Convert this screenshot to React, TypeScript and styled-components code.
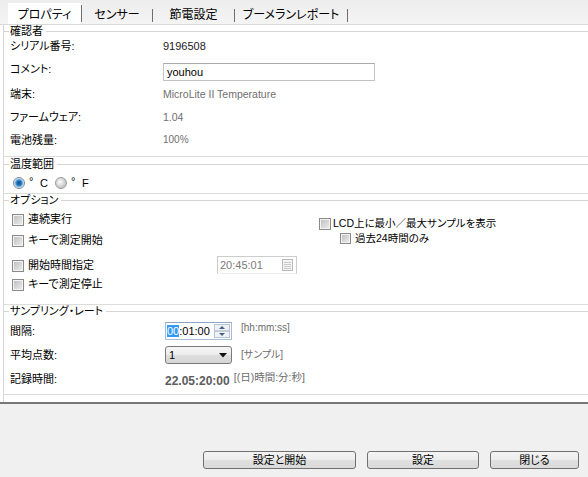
import React from "react";
import styled, { createGlobalStyle } from "styled-components";

const FONT = `"Liberation Sans", "Noto Sans CJK JP", sans-serif`;

const Global = createGlobalStyle`
  html, body { margin: 0; padding: 0; background: #f0f0f0; }
  body { font-family: ${FONT}; font-size: 11px; color: #000; }
  * { box-sizing: border-box; }
`;

const Window = styled.div`
  width: 588px;
  height: 477px;
  display: flex;
  flex-direction: column;
  background: #f0f0f0;
  overflow: hidden;
  font-feature-settings: "palt";
`;

const TabBar = styled.div`
  height: 24px;
  flex: none;
  display: flex;
  align-items: flex-end;
  padding-left: 8px;
  background: linear-gradient(#ededed, #f4f4f4);
`;

const Tab = styled.div<{ $w: number; $active?: boolean }>`
  position: relative;
  width: ${(p) => p.$w}px;
  height: 21px;
  padding-top: 5px;
  padding-right: 1px;
  text-align: center;
  font-size: 12px;
  line-height: 14px;
  background: ${(p) => (p.$active ? "#ffffff" : "transparent")};
  &::after {
    content: "";
    position: absolute;
    right: 0;
    width: 1px;
    top: ${(p) => (p.$active ? 2 : 6)}px;
    bottom: 2px;
    background: #6e6e6e;
  }
`;

const Panel = styled.div`
  flex: none;
  background: #ffffff;
  border-top: 1px solid #d9d9d9;
  border-bottom: 2px solid #777777;
`;

const Inner = styled.div`
  margin-left: 3px;
  border-left: 1px solid #d6d6d6;
  padding-bottom: 7px;
  display: flex;
  flex-direction: column;
`;

const GroupTitle = styled.div<{ $gap?: number }>`
  height: 12px;
  margin-top: ${(p) => p.$gap ?? 0}px;
  display: flex;
  align-items: center;
  font-size: 11px;
  line-height: 12px;
  white-space: nowrap;
  &::before {
    content: "";
    width: 5px;
    height: 1px;
    margin-right: 1px;
    background: #d5d5d5;
  }
  &::after {
    content: "";
    flex: 1;
    height: 1px;
    margin-left: 3px;
    background: #d5d5d5;
  }
`;

const GroupBody = styled.div<{ $h: number; $pt?: number; $pl?: number }>`
  height: ${(p) => p.$h}px;
  padding-top: ${(p) => p.$pt ?? 0}px;
  padding-left: ${(p) => p.$pl ?? 6}px;
  border-bottom: 1px solid #dcdcdc;
`;

const InfoRow = styled.div<{ $h: number; $end?: boolean }>`
  height: ${(p) => p.$h}px;
  display: flex;
  align-items: ${(p) => (p.$end ? "flex-end" : "center")};
`;

const Label = styled.div<{ $w?: number }>`
  width: ${(p) => p.$w ?? 153}px;
  flex: none;
  font-size: 11px;
  line-height: 14px;
  align-self: center;
`;

const Value = styled.div<{ $grey?: boolean; $size?: number }>`
  font-size: ${(p) => p.$size ?? 11}px;
  line-height: 14px;
  color: ${(p) => (p.$grey ? "#6f6f6f" : "#1a1a1a")};
`;

const TextBox = styled.div`
  width: 212px;
  height: 18px;
  margin-bottom: 1px;
  border: 1px solid #c3c3c3;
  border-top-color: #ababab;
  padding: 0 3px;
  font-size: 11px;
  line-height: 16px;
  color: #000;
  display: flex;
  align-items: center;
`;

const RadioRow = styled.div`
  height: 20px;
  display: flex;
  align-items: center;
  padding-left: 2px;
  font-size: 11px;
`;

const Radio = styled.span<{ $on?: boolean }>`
  width: 12px;
  height: 12px;
  flex: none;
  border-radius: 50%;
  border: 1px solid ${(p) => (p.$on ? "#7d8a99" : "#9b9b9b")};
  background: ${(p) =>
    p.$on
      ? "radial-gradient(circle at 50% 50%, #0f4f8a 0, #1d6db3 2px, #4a9ad6 3.2px, #a8d1ef 4.2px, #e9e9e9 5px)"
      : "radial-gradient(circle at 40% 40%, #fafafa 0, #e2e2e2 3px, #c9c9c9 5px)"};
`;

const Deg = styled.span`
  width: 11px;
  margin-left: 4px;
  font-size: 11px;
  line-height: 12px;
  position: relative;
  top: -2px;
`;

const Unit = styled.span<{ $mr?: number }>`
  margin-right: ${(p) => p.$mr ?? 0}px;
  line-height: 12px;
`;

const OptionGrid = styled.div`
  display: grid;
  grid-template-columns: 307px 1fr;
`;

const Column = styled.div<{ $pt?: number }>`
  display: flex;
  flex-direction: column;
  padding-top: ${(p) => p.$pt ?? 0}px;
`;

const CheckRow = styled.div<{ $mt?: number; $h?: number; $indent?: number; $gap?: number; $size?: number }>`
  height: ${(p) => p.$h ?? 18}px;
  margin-top: ${(p) => p.$mt ?? 0}px;
  padding-left: ${(p) => p.$indent ?? 0}px;
  display: flex;
  align-items: center;
  gap: ${(p) => p.$gap ?? 4}px;
  font-size: ${(p) => p.$size ?? 11}px;
  line-height: 14px;
  white-space: nowrap;
`;

const Check = styled.span<{ $size?: number }>`
  width: ${(p) => p.$size ?? 12}px;
  height: ${(p) => p.$size ?? 12}px;
  flex: none;
  margin-top: 2px;
  border: 1px solid #8a8a8a;
  box-shadow: inset 0 0 0 1px #f3f3f3;
  background: linear-gradient(135deg, #bcbcbc 0%, #d8d8d8 55%, #efefef 100%);
`;

const CheckText = styled.span`
  flex: 1;
`;

const TimeBox = styled.div`
  width: 80px;
  height: 18px;
  margin-right: 22px;
  border: 1px solid #cdcdcd;
  border-bottom-color: #eeeeee;
  display: flex;
  align-items: center;
  justify-content: space-between;
  padding: 0 3px 0 2px;
  font-size: 11px;
  color: #7b7b7b;
`;

const FieldRow = styled.div`
  height: 24px;
  display: flex;
  align-items: center;
`;

const SpinBox = styled.div`
  width: 67px;
  height: 18px;
  border: 1px solid #a9bcd6;
  border-top-color: #8ea6c8;
  display: flex;
  align-items: center;
  padding: 0 1px;
  font-size: 11px;
  line-height: 13px;
`;

const Selected = styled.span`
  background: #3399ff;
  color: #ffffff;
`;

const SpinText = styled.span`
  flex: 1;
`;

const Hint = styled.span<{ $ml?: number; $mt?: number; $size?: number }>`
  margin-left: ${(p) => p.$ml ?? 9}px;
  margin-top: ${(p) => p.$mt ?? 0}px;
  align-self: center;
  font-size: ${(p) => p.$size ?? 10}px;
  line-height: 12px;
  color: #6b6b6b;
  white-space: nowrap;
`;

const Select = styled.div`
  width: 67px;
  height: 18px;
  border: 1px solid #7a7a7a;
  border-radius: 3px;
  background: linear-gradient(#f6f6f6 0%, #ececec 50%, #dedede 51%, #d6d6d6 100%);
  display: flex;
  align-items: center;
  justify-content: space-between;
  padding: 0 4px 0 3px;
  font-size: 11px;
`;

const Duration = styled.span`
  font-size: 12px;
  font-weight: bold;
  color: #5c5c5c;
  line-height: 14px;
  margin-top: 3px;
`;

const Footer = styled.div`
  flex: 1;
  display: flex;
  justify-content: flex-end;
  align-items: flex-end;
  gap: 11px;
  padding: 0 9px 8px 0;
`;

const Button = styled.button<{ $w: number }>`
  width: ${(p) => p.$w}px;
  height: 18px;
  padding: 0;
  border: 1px solid #707070;
  border-radius: 3px;
  background: linear-gradient(#f4f4f4 0%, #ececec 50%, #e0e0e0 51%, #dadada 100%);
  font-family: ${FONT};
  font-feature-settings: "palt";
  font-size: 11px;
  line-height: 14px;
  color: #000;
`;

const SpinIcon = () => (
  <svg width="16" height="14" viewBox="0 0 16 14">
    <rect x="0.5" y="0.5" width="15" height="13" fill="#eef2f7" stroke="#b6c3d3" />
    <line x1="1" y1="7" x2="15" y2="7" stroke="#9aaabd" />
    <polygon points="5,5 8,2 11,5" fill="#4a5f80" />
    <polygon points="5,9 8,12 11,9" fill="#4a5f80" />
  </svg>
);

const CalendarIcon = () => (
  <svg width="11" height="12" viewBox="0 0 11 12">
    <rect x="0.5" y="0.5" width="10" height="11" fill="#f4f4f4" stroke="#b9b9b9" />
    <line x1="2" y1="3.5" x2="9" y2="3.5" stroke="#c8c8c8" />
    <line x1="2" y1="5.5" x2="9" y2="5.5" stroke="#c8c8c8" />
    <line x1="2" y1="7.5" x2="9" y2="7.5" stroke="#c8c8c8" />
    <line x1="2" y1="9.5" x2="9" y2="9.5" stroke="#c8c8c8" />
  </svg>
);

const DropArrow = () => (
  <svg width="8" height="5" viewBox="0 0 8 5">
    <polygon points="0,0 8,0 4,4.5" fill="#111" />
  </svg>
);

const tabs = [
  { label: "プロパティ", w: 74, active: true },
  { label: "センサー", w: 71 },
  { label: "節電設定", w: 82 },
  { label: "ブーメランレポート", w: 113 },
];

const info = [
  { label: "端末:", value: "MicroLite II Temperature", size: 10.5 },
  { label: "ファームウェア:", value: "1.04", size: 10.5 },
  { label: "電池残量:", value: "100%", size: 10 },
];

export default function App() {
  return (
    <Window>
      <Global />
      <TabBar>
        {tabs.map((t) => (
          <Tab key={t.label} $w={t.w} $active={t.active}>
            {t.label}
          </Tab>
        ))}
      </TabBar>
      <Panel>
        <Inner>
          <GroupTitle>確認者</GroupTitle>
          <GroupBody $h={120}>
            <InfoRow $h={18}>
              <Label>シリアル番号:</Label>
              <Value>9196508</Value>
            </InfoRow>
            <InfoRow $h={27} $end>
              <Label>コメント:</Label>
              <TextBox>youhou</TextBox>
            </InfoRow>
            {info.map((r) => (
              <InfoRow key={r.label} $h={23}>
                <Label>{r.label}</Label>
                <Value $grey $size={r.size}>
                  {r.value}
                </Value>
              </InfoRow>
            ))}
          </GroupBody>

          <GroupTitle $gap={1}>温度範囲</GroupTitle>
          <GroupBody $h={24} $pt={3} $pl={7}>
            <RadioRow>
              <Radio $on />
              <Deg>°</Deg>
              <Unit $mr={7}>C</Unit>
              <Radio />
              <Deg>°</Deg>
              <Unit>F</Unit>
            </RadioRow>
          </GroupBody>

          <GroupTitle>オプション</GroupTitle>
          <GroupBody $h={99} $pt={4} $pl={8}>
            <OptionGrid>
              <Column>
                <CheckRow>
                  <Check />
                  <CheckText>連続実行</CheckText>
                </CheckRow>
                <CheckRow $mt={3}>
                  <Check />
                  <CheckText>キーで測定開始</CheckText>
                </CheckRow>
                <CheckRow $mt={7}>
                  <Check />
                  <CheckText>開始時間指定</CheckText>
                  <TimeBox>
                    <span>20:45:01</span>
                    <CalendarIcon />
                  </TimeBox>
                </CheckRow>
                <CheckRow $mt={1}>
                  <Check />
                  <CheckText>キーで測定停止</CheckText>
                </CheckRow>
              </Column>
              <Column $pt={5}>
                <CheckRow $h={15} $gap={2} $size={10.5}>
                  <Check />
                  <CheckText>LCD上に最小／最大サンプルを表示</CheckText>
                </CheckRow>
                <CheckRow $h={15} $indent={21} $gap={4} $size={10.5}>
                  <Check $size={11} />
                  <CheckText>過去24時間のみ</CheckText>
                </CheckRow>
              </Column>
            </OptionGrid>
          </GroupBody>

          <GroupTitle>サンプリング・レート</GroupTitle>
          <GroupBody $h={78} $pt={2}>
            <FieldRow>
              <Label $w={155}>間隔:</Label>
              <SpinBox>
                <SpinText>
                  <Selected>00</Selected>:01:00
                </SpinText>
                <SpinIcon />
              </SpinBox>
              <Hint $mt={-6}>[hh:mm:ss]</Hint>
            </FieldRow>
            <FieldRow>
              <Label $w={155}>平均点数:</Label>
              <Select>
                <span>1</span>
                <DropArrow />
              </Select>
              <Hint>[サンプル]</Hint>
            </FieldRow>
            <FieldRow>
              <Label $w={155}>記録時間:</Label>
              <Duration>22.05:20:00</Duration>
              <Hint $ml={4} $mt={-4} $size={10.5}>
                [(日)時間:分:秒]
              </Hint>
            </FieldRow>
          </GroupBody>
        </Inner>
      </Panel>
      <Footer>
        <Button $w={153}>設定と開始</Button>
        <Button $w={112}>設定</Button>
        <Button $w={89}>閉じる</Button>
      </Footer>
    </Window>
  );
}
